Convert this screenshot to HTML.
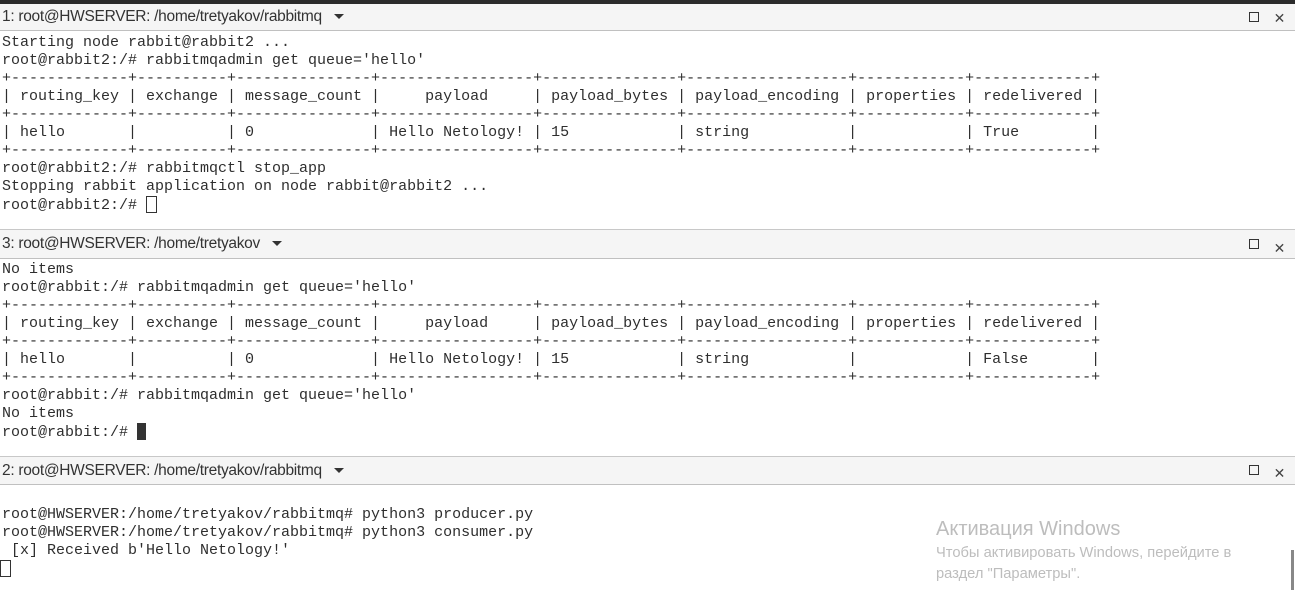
<!DOCTYPE html>
<html><head><meta charset="utf-8"><style>
*{margin:0;padding:0;box-sizing:border-box}
body{width:1295px;height:590px;background:#fff;position:relative;overflow:hidden;font-family:"Liberation Mono",monospace;}
.top{position:absolute;left:0;top:0;width:1295px;height:4px;background:#2b2b2b}
.tb{position:absolute;left:0;width:1295px;background:#f5f5f5;border-top:1px solid #c8c8c8;border-bottom:1px solid #c0c0c0;font-family:"Liberation Sans",sans-serif;font-size:15.5px;letter-spacing:-0.3px;color:#333;padding-left:2px;}
.tb span.ar{display:inline-block;margin-left:12px;width:0;height:0;border-left:5px solid transparent;border-right:5px solid transparent;border-top:5px solid #333;vertical-align:middle}
.sq{position:absolute;right:36px;width:10px;height:10px;border:1.5px solid #333}
.x{position:absolute;right:10px;font-size:14px;color:#444;font-family:"DejaVu Sans",sans-serif}
pre{position:absolute;left:2px;font-family:"Liberation Mono",monospace;font-size:15px;line-height:18px;color:#2e2e2e;letter-spacing:0}
.cur{display:inline-block;width:11px;height:17px;border:1px solid #333;vertical-align:-4px}
.curf{display:inline-block;width:9px;height:17px;background:#333;vertical-align:-4px}
.wm{position:absolute;left:936px;font-family:"Liberation Sans",sans-serif;color:#bdbdbd}
</style></head><body>
<div class="top"></div>
<div class="tb" style="top:4px;height:27px;line-height:25px;border-top:none">1: root@HWSERVER: /home/tretyakov/rabbitmq<span class="ar"></span><div class="sq" style="top:8px"></div><div class="x" style="top:3px">✕</div></div>
<pre style="top:34px">Starting node rabbit@rabbit2 ...
root@rabbit2:/# rabbitmqadmin get queue='hello'
+-------------+----------+---------------+-----------------+---------------+------------------+------------+-------------+
| routing_key | exchange | message_count |     payload     | payload_bytes | payload_encoding | properties | redelivered |
+-------------+----------+---------------+-----------------+---------------+------------------+------------+-------------+
| hello       |          | 0             | Hello Netology! | 15            | string           |            | True        |
+-------------+----------+---------------+-----------------+---------------+------------------+------------+-------------+
root@rabbit2:/# rabbitmqctl stop_app
Stopping rabbit application on node rabbit@rabbit2 ...
root@rabbit2:/# <span class="cur"></span></pre>
<div class="tb" style="top:229px;height:30px;line-height:28px">3: root@HWSERVER: /home/tretyakov<span class="ar"></span><div class="sq" style="top:9px"></div><div class="x" style="top:5px">✕</div></div>
<pre style="top:261px">No items
root@rabbit:/# rabbitmqadmin get queue='hello'
+-------------+----------+---------------+-----------------+---------------+------------------+------------+-------------+
| routing_key | exchange | message_count |     payload     | payload_bytes | payload_encoding | properties | redelivered |
+-------------+----------+---------------+-----------------+---------------+------------------+------------+-------------+
| hello       |          | 0             | Hello Netology! | 15            | string           |            | False       |
+-------------+----------+---------------+-----------------+---------------+------------------+------------+-------------+
root@rabbit:/# rabbitmqadmin get queue='hello'
No items
root@rabbit:/# <span class="curf"></span></pre>
<div class="tb" style="top:456px;height:29px;line-height:27px">2: root@HWSERVER: /home/tretyakov/rabbitmq<span class="ar"></span><div class="sq" style="top:8px"></div><div class="x" style="top:4px">✕</div></div>
<pre style="top:506px">root@HWSERVER:/home/tretyakov/rabbitmq# python3 producer.py
root@HWSERVER:/home/tretyakov/rabbitmq# python3 consumer.py
 [x] Received b'Hello Netology!'
<span class="cur" style="margin-left:-2px"></span></pre>
<div class="wm" style="top:518px;font-size:20px">Активация Windows</div>
<div class="wm" style="top:543px;font-size:14.7px;line-height:21px">Чтобы активировать Windows, перейдите в<br>раздел "Параметры".</div>
<div style="position:absolute;left:1291px;top:550px;width:3px;height:40px;background:#888"></div>
</body></html>
